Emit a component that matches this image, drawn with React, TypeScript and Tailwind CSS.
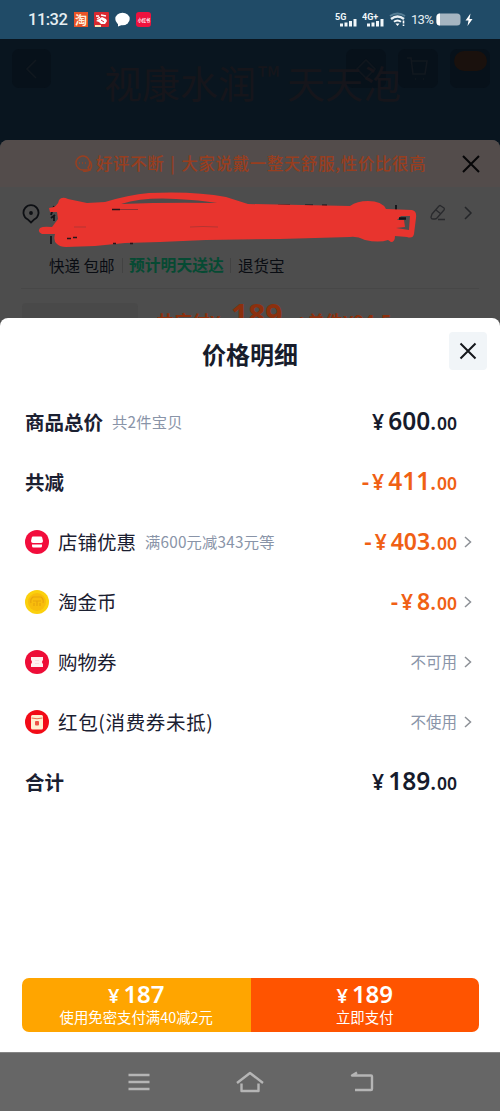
import type { ReactNode } from 'react';

const num = "font-['Noto_Sans','Noto_Sans_CJK_SC',sans-serif]";

function Signal({ label }: { label: string }) {
  return (
    <svg width="23" height="18" viewBox="0 0 23 18" className="shrink-0">
      <text x="0" y="8.6" fontSize="9" fontWeight="700" fill="#f1f7fa" fontFamily="Roboto, sans-serif">
        {label}
      </text>
      <g fill="#f1f7fa">
        <rect x="5" y="12.5" width="3" height="3" />
        <rect x="9.5" y="11.500" width="3" height="4" />
        <rect x="14" y="10" width="3" height="5.500" />
        <rect x="18.5" y="8" width="3" height="7.500" />
      </g>
    </svg>
  );
}

function StatusBar() {
  return (
    <div className="flex h-[39px] shrink-0 items-center bg-[#204b67] pl-[28px]">
      <span className="w-[46px] font-[Roboto,sans-serif] text-[16.500px] font-medium leading-[39px] tracking-[-0.5px] text-[#e6eef2]">11:32</span>
      <div className="flex w-[77px] items-center justify-between">
        <span className="flex h-[15px] w-[14px] items-center justify-center overflow-hidden bg-[#ea5427] text-[12px] font-bold leading-none text-[#fff0dc]">淘</span>
        <svg width="15" height="15" viewBox="0 0 15 15">
          <rect width="15" height="15" rx="1" fill="#d82830" />
          <path d="M2 4h3M7 3l5 1M3 7l3-2" stroke="#fff" strokeWidth="1.3" fill="none" />
          <path d="M5 7l3-2 4 2 1 2-2 3H7L5 10 2 9z" fill="#fff" />
          <path d="M7 8l3 2" stroke="#d82830" />
          <path d="M1 14h6" stroke="#ffe2b4" strokeWidth="2" />
        </svg>
        <svg width="15" height="15" viewBox="0 0 15 15">
          <ellipse cx="7.5" cy="7" rx="7.2" ry="6.3" fill="#fff" />
          <path d="M3 11l0 3.5 5-2z" fill="#fff" />
        </svg>
        <span className="flex h-[15px] w-[15px] items-center justify-center rounded-[3px] bg-[#ef123e]">
          <span className="block origin-center scale-[0.35] whitespace-nowrap text-[12px] font-bold leading-none text-white">小红书</span>
        </span>
      </div>
      <div className="ml-[184px] flex items-center">
        <Signal label="5G" />
        <span className="w-[4px]" />
        <Signal label="4G+" />
        <svg width="17" height="15" viewBox="0 0 17 15" className="ml-[4px] shrink-0" fill="none" strokeWidth="2">
          <path d="M1 4Q8.5-1 16 4" stroke="#557d94" />
          <path d="M2 7Q8.5 2 15 7" stroke="#e9f0f4" strokeWidth="2.400" />
          <path d="M5 9.8q3.5-2.700 7 0" stroke="#f4f8fa" />
          <path d="M6.5 11.5h4l-2 2.5z" fill="#fff" />
          <path d="M14.5 8.5v5.5" stroke="#fff" strokeWidth="1.6" strokeDasharray="3 1" />
        </svg>
        <span className="ml-[5px] w-[25px] font-[Roboto,sans-serif] text-[13px] leading-none tracking-[-0.7px] text-[#e4edf2]">13%</span>
        <svg width="37" height="15" viewBox="0 0 37 15" className="shrink-0">
          <rect x="0.5" y="1.5" width="24" height="12" rx="3.5" fill="#a5b5c1" />
          <path d="M4 1.5a3.5 3.5 0 0 0-3.5 3.5v5a3.5 3.5 0 0 0 3.5 3.5z" fill="#fff" />
          <path d="M34.5 1.5l-5 7h3l-1 5.5 5-7h-3z" fill="#fff" />
        </svg>
      </div>
    </div>
  );
}

function DimHeader() {
  return (
    <div className="relative h-[101px] shrink-0 bg-[#09151f]">
      <div className="flex justify-between pl-[12px] pr-[10px] pt-[10px]">
        <span className="flex h-[39px] w-[39px] items-center justify-center rounded-[7px] bg-[#07111a]">
          <svg width="16" height="24" viewBox="0 0 16 24" fill="none" stroke="#11181f" strokeWidth="1.6"><path d="M12 3l-9 9 9 9" /></svg>
        </span>
        <div className="flex gap-[12px]">
          <span className="flex h-[39px] w-[40px] items-center justify-center rounded-[7px] bg-[#07111a]">
            <svg width="24" height="24" viewBox="0 0 24 24" fill="none" stroke="#10161d" strokeWidth="1.6"><path d="M3 12l9-9 9 9-9 9z" /></svg>
          </span>
          <span className="flex h-[39px] w-[40px] items-center justify-center rounded-[7px] bg-[#07111a]">
            <svg width="24" height="26" viewBox="0 0 24 26" fill="none" stroke="#12181f" strokeWidth="1.6"><path d="M1 2h4l2 16h12l2-13H6M9 23h1M17 23h1" /></svg>
          </span>
          <span className="flex h-[39px] w-[40px] items-start justify-center rounded-[7px] bg-[#07111a]">
            <span className="mt-[2px] h-[20px] w-[33px] rounded-full bg-[#1a110d]" />
          </span>
        </div>
      </div>
      <div className="absolute left-[104px] top-[15px] flex whitespace-nowrap text-[38px] font-normal leading-[56px] text-[#16151b]">
        视康水润<span className="w-[31px] pl-[2px] text-[30px] leading-[44px]">™</span>天天泡
      </div>
    </div>
  );
}

function Scribble() {
  return (
    <svg className="absolute left-[30px] top-[50px]" width="395" height="62" viewBox="30 190 395 62" fill="none">
      <g stroke="#111318" strokeWidth="1.8">
        <path d="M51 210h7M54 206l-3 9M51 218l4-3M54 215v6M61 206l3-2M61 216l2 3M51 236v8M278 205.500h12M305 205.500h8M322 205.500h5M396 205v6" />
      </g>
      <path
        fill="#e8342e"
        d="M49 208Q58 207 59 200Q62 196 68 199L87 203L105 202Q128 195 149 193Q195 191 226 197L248 204L350 206Q357 201 368 201Q382 201 386 209L412 210Q417 211 416 218L414 234Q413 239 407 237L395 236Q395 242 391 242L388 240Q379 243 365 240Q357 236 350 237L280 239L206 240L160 242L125 243L95 246L66 247Q60 247 57 244Q53 241 55 234L42 234Q37 232 40 228Q43 226 52 227L58 219L57 212L50 212Z"
      />
      <path fill="#4d4b4b" d="M121 204Q144 197 176 199Q200 200 217 203Q168 202 121 204Z" />
      <path fill="#4d4d4d" d="M401 216h9l-1 14-13-2 9-1-1-7h-7Z" />
      <path d="M399 218.500h7" stroke="#111318" strokeWidth="2.5" />
      <path d="M112 209.5h8M67 238.500h4M73 237.500h4M113 243.500h3M130 243.500h3" stroke="#26151b" strokeWidth="1.5" />
      <path d="M120 209.500h18" stroke="#932e30" />
      <path d="M74 227h12M190 227q12-1 28 0" stroke="#b53432" />
    </svg>
  );
}

function DimOrder() {
  return (
    <div className="h-[178px] shrink-0 bg-[#09151f]">
      <div className="relative h-full overflow-hidden rounded-t-[8px] bg-[#4d4d4d]">
        <div className="flex h-[47px] items-center bg-[#534c4b] pl-[74px]">
          <svg width="19" height="18" viewBox="0 0 19 18" fill="none" stroke="#9a3f20" strokeWidth="1.5">
            <path d="M8.500 1a7 7 0 1 0 1 14H15.500l-1.500-2.500A7 7 0 0 0 8.500 1z" />
            <path d="M16 6q3 5 0 9-3 2-7 1M5 8h1M8 8h1M11 8h1" />
          </svg>
          <span className="ml-[3px] w-[366px] whitespace-nowrap text-[16.500px] font-medium leading-[47px] tracking-[0.600px] text-[#983e1f]">
            好评不断<span className="inline-block w-[17px] text-center">|</span>大家说戴一整天舒服,性价比很高
          </span>
          <svg width="18" height="18" viewBox="0 0 18 18" className="shrink-0" stroke="#060608" strokeWidth="2"><path d="M1 1l16 16M17 1L1 17" /></svg>
        </div>
        <div className="flex h-[64px] items-start justify-between pl-[22px] pr-[27px] pt-[17px]">
          <svg width="18" height="20" viewBox="0 0 18 20" fill="none" stroke="#0d0f13" strokeWidth="1.800">
            <path d="M5.500 15.200a7.500 7.500 0 1 1 7 0L9 18.500z" /><circle cx="9" cy="9" r="1" fill="#0d0f13" />
          </svg>
          <div className="flex items-center gap-[18px]">
            <svg width="16" height="18" viewBox="0 0 16 18" fill="none" stroke="#292a2d" strokeWidth="1.300">
              <path d="M2 10l7-8q1-1 2 0l3 2q1 1 0 2l-7 8q-1 1-2 1H3q-2 0-2-2zM6 6l5 4M8 15.500h7" />
            </svg>
            <svg width="9" height="14" viewBox="0 0 9 14" fill="none" stroke="#242629" strokeWidth="1.500"><path d="M1 1l6 6-6 6" /></svg>
          </div>
        </div>
        <Scribble />
        <div className="flex h-[28px] items-center pl-[49px] text-[15.500px] leading-[28px] text-[#090c12]">
          <span className="w-[73px]">快递 包邮</span>
          <span className="mr-[6px] h-[15px] w-px bg-[#424242]" />
          <span className="w-[101px] whitespace-nowrap text-[15.800px] font-bold text-[#064a33]">预计明天送达</span>
          <span className="mr-[7px] h-[15px] w-px bg-[#424242]" />
          <span>退货宝</span>
        </div>
        <div className="mx-[21px] mt-[9px] h-px bg-[#474747]" />
        <div className="flex h-[29px] overflow-hidden pl-[22px]">
          <span className="mt-[14px] h-[15px] w-[116px] rounded-t-[4px] bg-[#494949]" />
          <div className="ml-[18px] mt-[8px] flex whitespace-nowrap font-bold text-[#8c300e]">
            <span className="mt-[9px] w-[75px] text-[18px] leading-[30px]">共应付¥</span>
            <span className="w-[62px] font-['Noto_Sans',sans-serif] text-[30px] leading-[36px]">189</span>
            <span className="mt-[8px] w-[14px] text-[17px] leading-[28px]">·</span>
            <span className="mt-[10px] text-[18px] leading-[28px]">单件¥94.5</span>
          </div>
        </div>
      </div>
    </div>
  );
}

type PriceProps = { whole: string; cents?: string; minus?: boolean; small?: boolean };

function Price({ whole, cents, minus, small }: PriceProps) {
  return (
    <span className={`mb-px flex items-baseline whitespace-nowrap font-semibold ${num} ${minus ? 'text-[#f06014]' : 'text-[#161b2c]'}`}>
      {minus && <span className="mr-[3px] text-[23px] leading-none">-</span>}
      <span className="mr-[4px] text-[21px] leading-none">¥</span>
      <span className={small ? 'text-[23px] leading-none' : 'text-[24.500px] leading-none'}>{whole}</span>
      {cents && <span className="text-[17.500px] leading-none"><span className="mr-[1px] text-[21px] leading-none">.</span>{cents}</span>}
    </span>
  );
}

function Chevron() {
  return (
    <svg width="8" height="12" viewBox="0 0 8 12" className="ml-[7px]" fill="none" stroke="#8d9197" strokeWidth="1.500"><path d="M1 1l5.500 5L1 11" /></svg>
  );
}

type RowProps = { label: string; note?: string; icon?: ReactNode; chevron?: boolean; children: ReactNode };

function Row({ label, note, icon, chevron, children }: RowProps) {
  return (
    <div className={`flex h-[60px] items-center pb-px pl-[25px] ${chevron ? 'pr-[28px]' : 'pr-[43px]'}`}>
      {icon && <span className="mr-[9px] flex w-[24px]">{icon}</span>}
      <span className={`text-[19.500px] leading-none text-[#1b2031] ${icon ? '' : 'font-bold'} ${label.length > 6 ? 'tracking-[0.650px]' : ''}`}>{label}</span>
      {note && <span className="ml-[9px] text-[15.300px] leading-none tracking-[0.200px] text-[#8994a8]">{note}</span>}
      <span className="ml-auto flex items-center">{children}{chevron && <Chevron />}</span>
    </div>
  );
}

const ShopIcon = (
  <svg width="24" height="24" viewBox="0 0 24 24">
    <circle cx="12" cy="12" r="12" fill="#f20d3c" />
    <path d="M8 6.500h8q1 0 1.200 1l.8 3.500q0 2-2 2H8q-2 0-2-2l.8-3.500Q7 6.500 8 6.500zM7 14.500h10v1.500q0 1.500-1.500 1.500h-7Q7 17.500 7 16z" fill="#fff" />
  </svg>
);
const CoinIcon = (
  <svg width="24" height="24" viewBox="0 0 24 24" fill="none">
    <circle cx="12" cy="12" r="12" fill="#fbd00d" />
    <circle cx="12" cy="12" r="9" fill="#f8bd0c" />
    <path d="M6 13q-1-4 2-6h8q3 2 2 6M8 11h8M9 13v3M12 11v5M15 13v3" stroke="#e8a50d" strokeWidth="1.200" />
  </svg>
);
const TicketIcon = (
  <svg width="24" height="24" viewBox="0 0 24 24">
    <circle cx="12" cy="12" r="12" fill="#ee0d37" />
    <path d="M6 7h12v3q-2 2 0 4v3H6v-3q2-2 0-4z" fill="#ffeff0" />
    <path d="M10 10.500h4M10 13.500h4" stroke="#fbdade" />
  </svg>
);
const PacketIcon = (
  <svg width="24" height="24" viewBox="0 0 24 24">
    <circle cx="12" cy="12" r="12" fill="#f20b17" />
    <rect x="6" y="5" width="12" height="14.500" rx="1.500" fill="#ffefd2" />
    <path d="M6.500 8q5.500 1.500 11 0" stroke="#e76e52" fill="none" />
    <rect x="10" y="11" width="4" height="4.500" rx="1" fill="#ed5145" />
  </svg>
);

function Sheet() {
  return (
    <div className="h-[734px] shrink-0 bg-[#4d4d4d]">
      <div className="flex h-full flex-col rounded-t-[8px] bg-white">
        <div className="flex h-[74px] items-start justify-between pl-[51px] pr-[13px] pt-[14px]">
          <span className="flex-1 text-center text-[24px] font-bold leading-[44px] text-[#171c2b]">价格明细</span>
          <button className="flex h-[38px] w-[38px] items-center justify-center rounded-[4px] bg-[#f1f5f8]">
            <svg width="18" height="18" viewBox="0 0 18 18" stroke="#15171c" strokeWidth="2"><path d="M1.500 1.500l15 15M16.500 1.500l-15 15" /></svg>
          </button>
        </div>
        <Row label="商品总价" note="共2件宝贝"><Price whole="600" cents="00" /></Row>
        <Row label="共减"><Price whole="411" cents="00" minus /></Row>
        <Row label="店铺优惠" note="满600元减343元等" icon={ShopIcon} chevron><Price whole="403" cents="00" minus small /></Row>
        <Row label="淘金币" icon={CoinIcon} chevron><Price whole="8" cents="00" minus small /></Row>
        <Row label="购物券" icon={TicketIcon} chevron><span className="text-[15.500px] leading-none text-[#8994a8]">不可用</span></Row>
        <Row label="红包(消费券未抵)" icon={PacketIcon} chevron><span className="text-[15.500px] leading-none text-[#8994a8]">不使用</span></Row>
        <Row label="合计"><Price whole="189" cents="00" /></Row>
        <div className="mb-[20px] ml-[22px] mr-[21px] mt-auto flex h-[54px] overflow-hidden rounded-[7px] text-white">
          <button className="flex flex-1 flex-col items-center bg-[#ffa500] pt-[5px]">
            <BuyPrice value="187" />
            <span className="mt-[4px] text-[14.400px] leading-[16px]">使用免密支付满40减2元</span>
          </button>
          <button className="flex flex-1 flex-col items-center bg-[#ff5400] pt-[5px]">
            <BuyPrice value="189" />
            <span className="mt-[4px] text-[14.400px] leading-[16px]">立即支付</span>
          </button>
        </div>
      </div>
    </div>
  );
}

function BuyPrice({ value }: { value: string }) {
  return (
    <span className={`flex h-[22px] items-baseline font-semibold ${num}`}>
      <span className="mr-[4px] text-[20px] leading-[20px]">¥</span>
      <span className="text-[24px] leading-[22px]">{value}</span>
    </span>
  );
}

function NavBar() {
  return (
    <div className="flex h-[59px] shrink-0 items-center justify-between border-t border-[#858585] bg-[#666] pl-[128px] pr-[126px]">
      <svg width="22" height="18" viewBox="0 0 22 18" stroke="#b5b5b5" strokeWidth="2.500"><path d="M.5 2h21M.5 9h21M.5 16h21" /></svg>
      <svg width="28" height="22" viewBox="0 0 28 22" fill="none" stroke="#b5b5b5" strokeWidth="2.400" strokeLinejoin="round"><path d="M1 12L14 2l13 10M5.500 12.500V20h17v-7.500" /></svg>
      <svg width="24" height="22" viewBox="0 0 24 22" fill="none" stroke="#b5b5b5" strokeWidth="2.400" strokeLinejoin="round"><path d="M7 1.500L2 4.500h19q1 0 1 1V18q0 1-1 1H5" /></svg>
    </div>
  );
}

export default function App() {
  return (
    <div className="flex h-[1111px] w-[500px] flex-col overflow-hidden font-['Noto_Sans_CJK_SC',sans-serif]">
      <StatusBar />
      <DimHeader />
      <DimOrder />
      <Sheet />
      <NavBar />
    </div>
  );
}
